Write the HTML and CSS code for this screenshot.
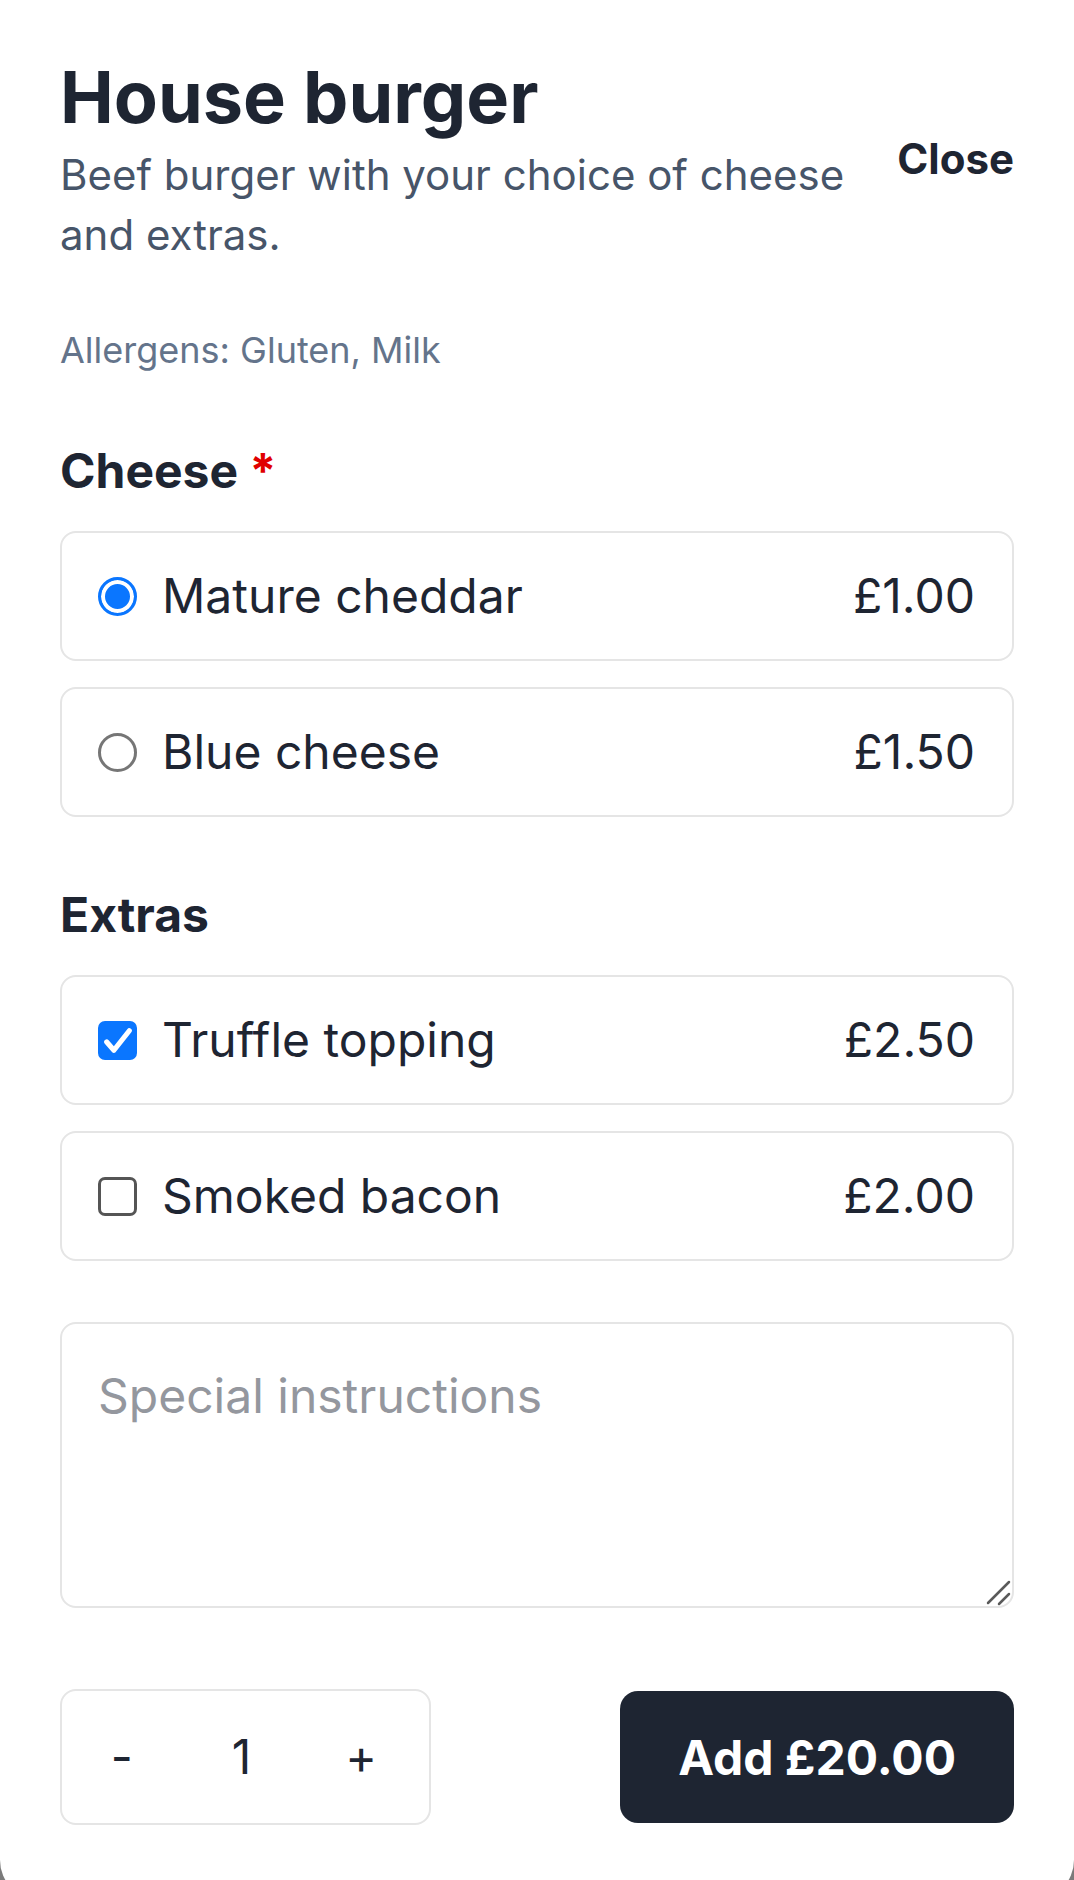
FILE: index.html
```html
<!DOCTYPE html>
<html lang="en">
<head>
<meta charset="utf-8">
<title>House burger</title>
<link rel="stylesheet" href="styles.css">
</head>
<body>
<div class="modal">
  <header class="head">
    <div class="head-text">
      <h1 class="title">House burger</h1>
      <p class="desc">Beef burger with your choice of cheese and extras.</p>
    </div>
    <button class="close" type="button">Close</button>
  </header>

  <p class="allergens">Allergens: Gluten, Milk</p>

  <section class="group">
    <h2 class="group-title">Cheese <span class="req">*</span></h2>
    <div class="options">
      <label class="option">
        <input class="radio" type="radio" name="cheese" checked>
        <span class="opt-name">Mature cheddar</span>
        <span class="opt-price">£1.00</span>
      </label>
      <label class="option">
        <input class="radio" type="radio" name="cheese">
        <span class="opt-name">Blue cheese</span>
        <span class="opt-price">£1.50</span>
      </label>
    </div>
  </section>

  <section class="group group-extras">
    <h2 class="group-title">Extras</h2>
    <div class="options">
      <label class="option">
        <span class="check-wrap">
          <input class="check" type="checkbox" checked>
          <svg class="tick" viewBox="0 0 38 38" aria-hidden="true"><path d="M8.5 20.5 L15.5 28.5 L30.5 9.5" fill="none" stroke="#fff" stroke-width="5" stroke-linecap="round" stroke-linejoin="round"/></svg>
        </span>
        <span class="opt-name">Truffle topping</span>
        <span class="opt-price">£2.50</span>
      </label>
      <label class="option">
        <span class="check-wrap">
          <input class="check" type="checkbox">
        </span>
        <span class="opt-name">Smoked bacon</span>
        <span class="opt-price">£2.00</span>
      </label>
    </div>
  </section>

  <div class="notes">
    <textarea class="notes-input" placeholder="Special instructions"></textarea>
    <svg class="grip" viewBox="0 0 30 30" aria-hidden="true"><path d="M4 25 L25 4 M15 26 L25 16" stroke="#5a5a5a" stroke-width="2.5" stroke-linecap="round"/></svg>
  </div>

  <footer class="foot">
    <div class="qty">
      <button class="qty-btn" type="button">-</button>
      <span class="qty-val">1</span>
      <button class="qty-btn" type="button">+</button>
    </div>
    <button class="add" type="button">Add £20.00</button>
  </footer>
</div>
</body>
</html>
```

FILE: styles.css
```css
html, body {
  margin: 0;
  height: 1880px;
  overflow: hidden;
}

body {
  background: #7b7b7b;
  font-family: Inter, "Noto Sans", sans-serif;
  color: #1e2532;
}

.modal {
  background: #ffffff;
  padding: 57px 60px 75px;
  border-radius: 0 0 40px 40px;
}

.head {
  display: flex;
  align-items: center;
  gap: 32px;
}

.head-text {
  flex: 1;
  min-width: 0;
}

.title {
  margin: 0;
  font-size: 72px;
  line-height: 80px;
  font-weight: 700;
  color: #1e2532;
}

.desc {
  margin: 8px 0 0;
  font-size: 42px;
  line-height: 60px;
  color: #475569;
}

.close {
  margin: 0 0 4px;
  padding: 0;
  border: 0;
  background: none;
  font-family: inherit;
  font-size: 42px;
  line-height: 48px;
  font-weight: 700;
  color: #1e2532;
}

.allergens {
  margin: 58px 0 0;
  font-size: 36px;
  line-height: 54px;
  color: #64748b;
}

.group {
  margin-top: 62px;
}

.group-extras {
  margin-top: 66px;
}

.group-title {
  margin: 0;
  font-size: 48px;
  line-height: 64px;
  font-weight: 700;
  color: #1e2532;
}

.req {
  color: #e00000;
}

.options {
  margin-top: 28px;
  display: flex;
  flex-direction: column;
  gap: 26px;
}

.option {
  box-sizing: border-box;
  height: 130px;
  display: flex;
  align-items: center;
  gap: 25px;
  padding: 0 37px 0 36px;
  border: 2px solid #e5e5e5;
  border-radius: 16px;
  font-size: 48px;
  line-height: 58px;
  color: #1e2532;
}

.opt-name {
  flex: 1;
}

.radio {
  appearance: none;
  -webkit-appearance: none;
  box-sizing: border-box;
  width: 39px;
  height: 39px;
  margin: 0;
  border: 3px solid #767676;
  border-radius: 50%;
  background: #fff;
  flex: none;
}

.radio:checked {
  border: 3.5px solid #0a76ff;
  background: #0a76ff;
  box-shadow: inset 0 0 0 4px #fff;
}

.check-wrap {
  position: relative;
  width: 39px;
  height: 39px;
  flex: none;
  display: block;
}

.check {
  appearance: none;
  -webkit-appearance: none;
  box-sizing: border-box;
  display: block;
  width: 39px;
  height: 39px;
  margin: 0;
  border: 3px solid #555555;
  border-radius: 7px;
  background: #fff;
}

.check:checked {
  border-color: #0a76ff;
  background: #0a76ff;
}

.tick {
  position: absolute;
  left: 0;
  top: 0;
  width: 39px;
  height: 39px;
  pointer-events: none;
}

.notes {
  position: relative;
  margin-top: 61px;
}

.notes-input {
  box-sizing: border-box;
  display: block;
  width: 100%;
  height: 286px;
  margin: 0;
  padding: 36px;
  border: 2px solid #e5e5e5;
  border-radius: 16px;
  font-family: inherit;
  font-size: 48px;
  line-height: 72px;
  color: #1e2532;
  resize: none;
  outline: none;
}

.notes-input::placeholder {
  color: #94979e;
}

.grip {
  position: absolute;
  right: 0;
  bottom: 0;
  width: 30px;
  height: 30px;
  pointer-events: none;
}

.foot {
  margin-top: 81px;
  display: flex;
  align-items: center;
  justify-content: space-between;
}

.qty {
  box-sizing: border-box;
  width: 371px;
  height: 136px;
  padding: 0 8px 0 0;
  display: grid;
  grid-template-columns: 1fr 1fr 1fr;
  align-items: center;
  justify-items: center;
  border: 2px solid #e5e5e5;
  border-radius: 16px;
  font-size: 48px;
  color: #1e2532;
}

.qty-btn {
  padding: 0;
  border: 0;
  background: none;
  font-family: inherit;
  font-size: 48px;
  line-height: 58px;
  color: #1e2532;
}

.qty-val {
  line-height: 58px;
}

.add {
  box-sizing: border-box;
  height: 132px;
  padding: 0 58px;
  border: 0;
  border-radius: 18px;
  background: #1e2532;
  color: #ffffff;
  font-family: inherit;
  font-size: 48px;
  font-weight: 700;
}
```
